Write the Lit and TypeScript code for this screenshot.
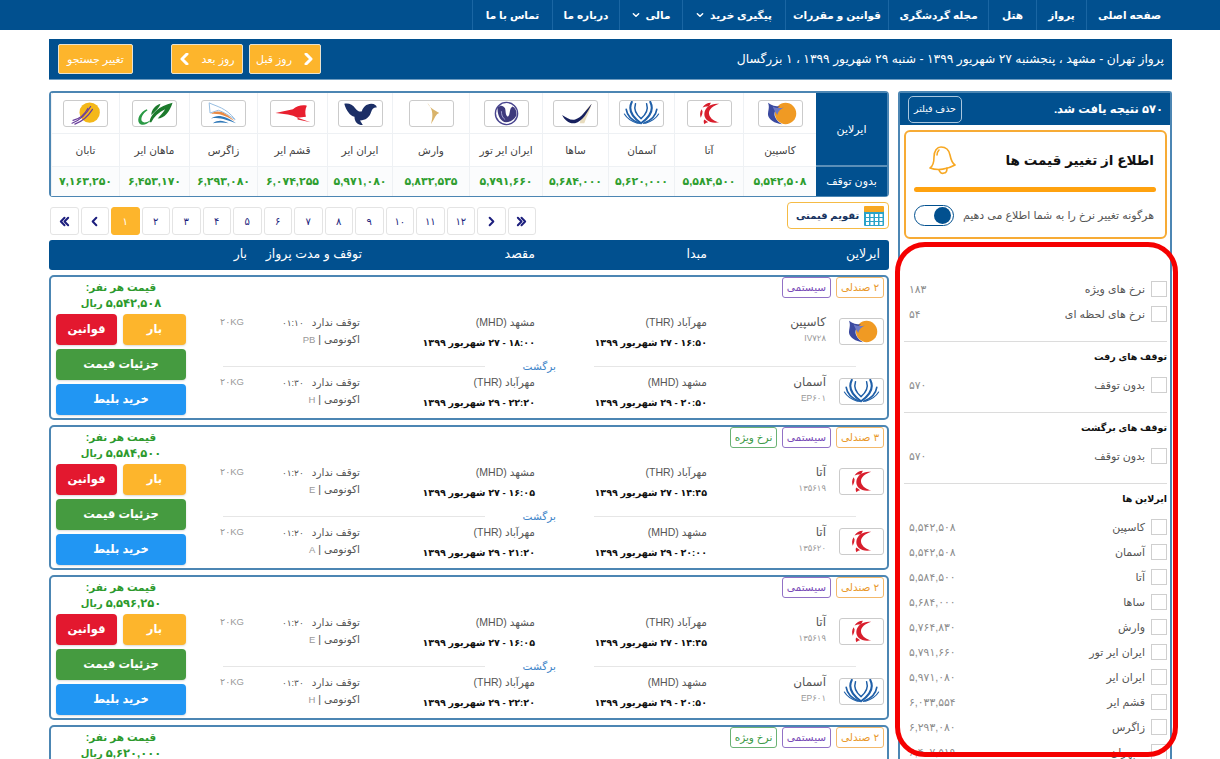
import { LitElement, html, css, svg, nothing } from 'lit';
import { customElement, property } from 'lit/decorators.js';
import { styleMap } from 'lit/directives/style-map.js';

// airline marks, all in a 45x27 box
const LOGOS: Record<string, unknown> = {
  caspian: svg`
    <circle cx="28" cy="13.5" r="11.5" fill="#f09a23" />
    <path d="M9 2c4 3 8 4 13 4-4 2-6 5-6 8 0 4 3 8 8 11-8-1-14-5-15-10 0-5 2-8 0-13z" fill="#3b4aa0" />
    <path d="M14 6c4 2 8 2 12 1-4 2-6 4-7 8-2-3-4-6-5-9z" fill="#6d79c4" />
  `,
  ata: svg`
    <path d="M33 3c-8-1-15 3-16 10-1 7 6 12 16 10-5-1-10-4-11-9-1-5 5-9 11-11z" fill="#d81e2c" />
    <path d="M24 2c-4 0-7 2-9 5 2-1 5-1 7-1zM14 9c-2 3-2 6-1 9 1-2 2-4 2-7zM17 20c-1 1-1 3 0 5 1-1 3-2 4-2z" fill="#d81e2c" />
  `,
  aseman: svg`
    <g fill="none" stroke="#1f5fa8" stroke-linecap="round">
      <path d="M12 1c-4 8 0 16 10 23 10-7 14-15 10-23" stroke-width="2.2" />
      <path d="M16 3c-2 6 0 11 6 16 6-5 8-10 6-16" stroke-width="1.6" />
      <path d="M6 9c1 7 6 12 14 15M39 9c-1 7-6 12-14 15" stroke-width="1.8" />
      <path d="M4 14c3 5 8 8 14 10M41 14c-3 5-8 8-14 10" stroke-width="1.2" />
    </g>
  `,
  saha: svg`
    <path d="M40 3c-2 8-6 15-8 21h-5c2-8 7-16 13-21z" fill="#e8dcbd" />
    <path d="M8 15c5 3 9 6 14 5 7-2 12-10 18-17-4 9-10 19-18 21-6 1-11-3-14-9z" fill="#17205e" />
  `,
  iranairtour: svg`
    <circle cx="22.5" cy="13.5" r="12" fill="#fff" stroke="#4a4690" stroke-width="1.5" />
    <path d="M13 7c3-3 6-2 8 1 1 4 0 7 3 9 3-2 1-9 5-11 3 1 5 5 4 10-2 4-6 7-11 7-6 0-10-9-9-16z" fill="#3e3a7d" />
    <path d="M17 11c0 4 1 7 4 9" fill="none" stroke="#a8a6d4" stroke-width="1" />
  `,
  varesh: svg`<path d="M18 2c3 6 9 9 13 11-4 1-5 6-9 12 2-8 3-15-4-23z" fill="#d9b36a" />`,
  iranair: svg`
    <path d="M5 3c5-1 9 1 12 5 2 3 5 4 7 3 1-4 5-8 10-8 4 0 6 2 6 4-4 0-5 2-6 5-2 6-6 9-12 9l3 5c-6 0-9-4-9-9-5-1-9-7-11-14z" fill="#1c2f66" />
  `,
  qeshm: svg`
    <path d="M4 13l19-4c4-4 10-5 15-4-2 4-2 8-1 12l-9 1c-6-3-14-4-24-5z" fill="#e8202f" />
    <path d="M28 18l14 5-14-3z" fill="#e8202f" />
  `,
  zagros: svg`
    <path d="M7 2c8 4 18 5 28 18-6-4-12-8-18-10l-9 3z" fill="none" stroke="#8fb8dd" stroke-width="1" />
    <path d="M9 14c7-5 14-3 26 8-9-5-16-9-26-8z" fill="#e98a45" />
    <path d="M9 19c7-5 15-3 27 5-10-3-17-7-27-5z" fill="#2f78b8" />
    <path d="M11 24c6-4 11-3 17 0-6-1-11-1-17 0z" fill="#2f78b8" />
  `,
  mahan: svg`
    <path d="M17 23c2-10 10-17 25-21-3 10-9 17-16 17 2-3 6-6 8-10-7 3-12 8-15 14z" fill="#1c7a2c" />
    <path d="M19 15c0-5 4-10 10-12-1 4-5 8-10 12z" fill="#1c7a2c" />
    <path d="M6 24c-3-4 1-12 8-15l1 1c-5 3-8 9-6 12 2 2 5 1 9-1-4 5-9 6-12 3z" fill="#2a9a45" />
  `,
  taban: svg`
    <circle cx="27" cy="12.5" r="11" fill="#f4b81a" />
    <g fill="none" stroke="#6a3f9c" stroke-width="1.3" stroke-linecap="round">
      <path d="M8 24c8-3 15-9 20-18" />
      <path d="M11 25c8-3 14-8 19-16" />
      <path d="M9 21c7-2 13-7 16-13" />
    </g>
  `,
};

@customElement('airline-logo')
export class AirlineLogo extends LitElement {
  @property({ type: String }) name = '';

  static styles = css`
    :host {
      display: block;
      width: 45px;
      height: 27px;
      box-sizing: border-box;
      border: 1px solid #cbcbcb;
      border-radius: 3px;
      background: #fff;
      overflow: hidden;
    }
    svg {
      display: block;
      width: 43px;
      height: 25px;
    }
  `;

  render() {
    return html`<svg viewBox="0 0 45 27">${LOGOS[this.name]}</svg>`;
  }
}

interface Leg {
  logo: string;
  airline: string;
  code: string;
  from: string;
  fromTime: string;
  to: string;
  toTime: string;
  duration: string;
  cls: string;
}

interface Flight {
  seats: string;
  special: boolean;
  price: string;
  legs: Leg[];
}

const caspianOut: Leg = {
  logo: 'caspian', airline: 'کاسپین', code: 'IV۷۲۸',
  from: 'مهرآباد (THR)', fromTime: '۱۶:۵۰ - ۲۷ شهریور ۱۳۹۹',
  to: 'مشهد (MHD)', toTime: '۱۸:۰۰ - ۲۷ شهریور ۱۳۹۹',
  duration: '۰۱:۱۰', cls: 'PB',
};
const asemanBack: Leg = {
  logo: 'aseman', airline: 'آسمان', code: 'EP۶۰۱',
  from: 'مشهد (MHD)', fromTime: '۲۰:۵۰ - ۲۹ شهریور ۱۳۹۹',
  to: 'مهرآباد (THR)', toTime: '۲۲:۲۰ - ۲۹ شهریور ۱۳۹۹',
  duration: '۰۱:۳۰', cls: 'H',
};
const ataOut: Leg = {
  logo: 'ata', airline: 'آتا', code: '۱۳۵۶۱۹',
  from: 'مهرآباد (THR)', fromTime: '۱۴:۴۵ - ۲۷ شهریور ۱۳۹۹',
  to: 'مشهد (MHD)', toTime: '۱۶:۰۵ - ۲۷ شهریور ۱۳۹۹',
  duration: '۰۱:۲۰', cls: 'E',
};
const ataBack: Leg = {
  logo: 'ata', airline: 'آتا', code: '۱۳۵۶۲۰',
  from: 'مشهد (MHD)', fromTime: '۲۰:۰۰ - ۲۹ شهریور ۱۳۹۹',
  to: 'مهرآباد (THR)', toTime: '۲۱:۲۰ - ۲۹ شهریور ۱۳۹۹',
  duration: '۰۱:۲۰', cls: 'A',
};

const FLIGHTS: Flight[] = [
  { seats: '۲ صندلی', special: false, price: '۵,۵۴۲,۵۰۸', legs: [caspianOut, asemanBack] },
  { seats: '۳ صندلی', special: true, price: '۵,۵۸۴,۵۰۰', legs: [ataOut, ataBack] },
  { seats: '۲ صندلی', special: false, price: '۵,۵۹۶,۲۵۰', legs: [ataOut, asemanBack] },
  { seats: '۲ صندلی', special: true, price: '۵,۶۲۰,۰۰۰', legs: [asemanBack, asemanBack] },
];

@customElement('flight-card')
export class FlightCard extends LitElement {
  @property({ attribute: false }) flight!: Flight;

  static styles = css`
    :host {
      display: flex;
      height: 145px;
      box-sizing: border-box;
      margin-bottom: 5px;
      border: 2px solid #4c86b3;
      border-radius: 5px;
      background: #fff;
      overflow: hidden;
    }
    .main {
      flex: 1;
      padding-right: 3px;
    }
    .tags {
      display: flex;
      gap: 5px;
      height: 37px;
    }
    .tag {
      height: 21px;
      box-sizing: border-box;
      border: 1px solid;
      border-radius: 3px;
      font-size: 10.5px;
      line-height: 19px;
      text-align: center;
    }
    .tag.seats {
      width: 48px;
      color: #ea9a2c;
      border-color: #f3b96c;
    }
    .tag.system {
      width: 49px;
      color: #7a4cb8;
      border-color: #9271c6;
    }
    .tag.special {
      width: 47px;
      color: #3d9b47;
      border-color: #6bb274;
    }
    .leg {
      display: grid;
      grid-template-columns: 177px 172px 175px 116px 58px;
      height: 44px;
      font-size: 10.5px;
      line-height: 16px;
      color: #555;
    }
    .carrier {
      display: flex;
      gap: 13px;
    }
    .carrier-name {
      font-size: 12px;
    }
    airline-logo {
      margin-top: 4px;
    }
    .muted {
      font-size: 9.5px;
      color: #999;
    }
    .code {
      font-size: 8.5px;
      color: #999;
    }
    .time {
      margin-top: 5px;
      font-size: 9.6px;
      font-weight: bold;
      color: #111;
    }
    .dur {
      margin-right: 8px;
      font-size: 9px;
    }
    .back {
      display: grid;
      grid-template-columns: 262px 109px 262px;
      align-items: center;
      height: 16px;
      margin-right: 28px;
      font-size: 10.5px;
      color: #3f86c9;
    }
    .back span {
      margin-right: 38px;
    }
    .back i {
      height: 1px;
      background: #e6e6e6;
    }
    .side {
      width: 130px;
      margin-left: 5px;
      padding-top: 2px;
      text-align: center;
      color: #2d9a2d;
      font-weight: bold;
      font-size: 10.5px;
      line-height: 16px;
    }
    .price {
      font-size: 11.5px;
    }
    .rial {
      font-size: 10px;
    }
    .btns {
      display: flex;
      flex-wrap: wrap;
      gap: 4px 6px;
      margin-top: 2px;
    }
    .btn {
      width: 100%;
      height: 31px;
      border-radius: 4px;
      color: #fff;
      font-size: 11.5px;
      font-weight: bold;
      line-height: 30px;
      box-shadow: 0 1px 2px rgba(0, 0, 0, 0.15);
    }
    .btn.half {
      width: 63px;
    }
    .btn.half + .btn.half {
      width: 61px;
    }
    .orange {
      background: #fdb52c;
    }
    .red {
      background: #e3182f;
    }
    .green {
      background: #459b40;
    }
    .sky {
      background: #2196f3;
    }
  `;

  private renderLeg(leg: Leg) {
    return html`
      <div class="leg">
        <div class="carrier">
          <airline-logo .name=${leg.logo}></airline-logo>
          <div>
            <div class="carrier-name">${leg.airline}</div>
            <div class="code">${leg.code}</div>
          </div>
        </div>
        <div>
          <div>${leg.from}</div>
          <div class="time">${leg.fromTime}</div>
        </div>
        <div>
          <div>${leg.to}</div>
          <div class="time">${leg.toTime}</div>
        </div>
        <div>
          <div>توقف ندارد<span class="dur">${leg.duration}</span></div>
          <div>اکونومی | <span class="muted">${leg.cls}</span></div>
        </div>
        <div class="muted">۲۰KG</div>
      </div>
    `;
  }

  render() {
    const f = this.flight;
    return html`
      <div class="main">
        <div class="tags">
          <div class="tag seats">${f.seats}</div>
          <div class="tag system">سیستمی</div>
          ${f.special ? html`<div class="tag special">نرخ ویژه</div>` : nothing}
        </div>
        ${this.renderLeg(f.legs[0])}
        <div class="back"><i></i><span>برگشت</span><i></i></div>
        ${this.renderLeg(f.legs[1])}
      </div>
      <div class="side">
        <div>قیمت هر نفر:</div>
        <div><span class="price">${f.price}</span> <span class="rial">ریال</span></div>
        <div class="btns">
          <div class="btn half orange">بار</div>
          <div class="btn half red">قوانین</div>
          <div class="btn green">جزئیات قیمت</div>
          <div class="btn sky">خرید بلیط</div>
        </div>
      </div>
    `;
  }
}

const FILTER_GROUPS = [
  {
    title: '',
    rows: [
      ['نرخ های ویژه', '۱۸۳'],
      ['نرخ های لحظه ای', '۵۴'],
    ],
  },
  { title: 'توقف های رفت', rows: [['بدون توقف', '۵۷۰']] },
  { title: 'توقف های برگشت', rows: [['بدون توقف', '۵۷۰']] },
  {
    title: 'ایرلاین ها',
    rows: [
      ['کاسپین', '۵,۵۴۲,۵۰۸'],
      ['آسمان', '۵,۵۴۲,۵۰۸'],
      ['آتا', '۵,۵۸۴,۵۰۰'],
      ['ساها', '۵,۶۸۴,۰۰۰'],
      ['وارش', '۵,۷۶۴,۸۳۰'],
      ['ایران ایر تور', '۵,۷۹۱,۶۶۰'],
      ['ایران ایر', '۵,۹۷۱,۰۸۰'],
      ['قشم ایر', '۶,۰۳۳,۵۵۴'],
      ['زاگرس', '۶,۲۹۳,۰۸۰'],
      ['سپهران', '۶,۴۰۷,۵۱۹'],
    ],
  },
];

@customElement('filter-sidebar')
export class FilterSidebar extends LitElement {
  static styles = css`
    :host {
      display: block;
      box-sizing: border-box;
      height: 700px;
      border: 2px solid #4c86b3;
      border-bottom: 0;
      border-radius: 3px 3px 0 0;
    }
    .head {
      display: flex;
      justify-content: space-between;
      align-items: center;
      height: 32px;
      padding: 0 7px 0 8px;
      background: #01508f;
      color: #fff;
      font-size: 11.5px;
      font-weight: bold;
    }
    .clear {
      width: 54px;
      height: 27px;
      box-sizing: border-box;
      border: 1px solid #a9c6de;
      border-radius: 5px;
      font-size: 9.5px;
      font-weight: normal;
      line-height: 24px;
      text-align: center;
    }
    .notify {
      height: 109px;
      box-sizing: border-box;
      margin: 5px 3px 0 4px;
      padding: 0 9px 0 8px;
      border: 2px solid #f7ab35;
      border-radius: 6px;
    }
    .notify-head {
      display: flex;
      justify-content: space-between;
      align-items: center;
      height: 55px;
      padding-right: 2px;
      color: #111;
      font-size: 13.5px;
      font-weight: bold;
    }
    .bell {
      width: 28px;
      height: 30px;
      margin-left: 14px;
    }
    .bar {
      height: 5px;
      border-radius: 3px;
      background: #ffa20f;
    }
    .notify-foot {
      display: flex;
      justify-content: space-between;
      align-items: center;
      margin-top: 13px;
      padding-right: 2px;
      font-size: 11px;
      color: #555;
    }
    .toggle {
      width: 40px;
      height: 21px;
      box-sizing: border-box;
      padding: 1px 2px;
      border: 1px solid #01508f;
      border-radius: 11px;
    }
    .toggle i {
      display: block;
      width: 17px;
      height: 17px;
      border-radius: 50%;
      background: #01508f;
    }
    .filters {
      margin: 42px 3px 0 4px;
    }
    .group {
      padding: 5px 0 9.5px;
      border-top: 1px solid #dcdcdc;
    }
    .group:first-child {
      padding-top: 0;
      border-top: 0;
    }
    .title {
      height: 20px;
      margin-bottom: 10.5px;
      color: #111;
      font-size: 9.5px;
      font-weight: bold;
      line-height: 20px;
    }
    .row {
      display: flex;
      height: 25px;
      color: #555;
      font-size: 11px;
      line-height: 16px;
    }
    .check {
      width: 16px;
      height: 16px;
      box-sizing: border-box;
      margin-left: 6px;
      border: 1px solid #cfcfcf;
    }
    .count {
      margin-right: auto;
      padding-left: 5px;
      color: #8c8c8c;
      font-size: 10.8px;
    }
  `;

  render() {
    return html`
      <div class="head">
        <span>۵۷۰ نتیجه یافت شد.</span>
        <div class="clear">حذف فیلتر</div>
      </div>
      <div class="notify">
        <div class="notify-head">
          <span>اطلاع از تغییر قیمت ها</span>
          <svg class="bell" viewBox="0 0 28 30" fill="none" stroke="#f7a823" stroke-width="1.6" stroke-linejoin="round" stroke-linecap="round">
            <path d="M2 23c3-2 4-6 4-11 0-6 3-10 7-10 5 0 8 3 9 8 1 5 2 8 5 10-7 4-17 6-25 3z" />
            <path d="M11 25c1 3 3 4 5 3 2 0 3-2 3-5" />
            <path d="M9 10c0-2 1-4 2-5" />
          </svg>
        </div>
        <div class="bar"></div>
        <div class="notify-foot">
          <span>هرگونه تغییر نرخ را به شما اطلاع می دهیم</span>
          <div class="toggle"><i></i></div>
        </div>
      </div>
      <div class="filters">
        ${FILTER_GROUPS.map(
          (g) => html`
            <div class="group">
              ${g.title ? html`<div class="title">${g.title}</div>` : nothing}
              ${g.rows.map(
                ([label, count]) => html`
                  <div class="row">
                    <div class="check"></div>
                    <span>${label}</span>
                    <span class="count">${count}</span>
                  </div>
                `,
              )}
            </div>
          `,
        )}
      </div>
    `;
  }
}

const NAV = [
  { label: 'صفحه اصلی', width: 86 },
  { label: 'پرواز', width: 50 },
  { label: 'هتل', width: 48 },
  { label: 'مجله گردشگری', width: 100 },
  { label: 'قوانین و مقررات', width: 103 },
  { label: 'پیگیری خرید', width: 103, caret: true },
  { label: 'مالی', width: 63, caret: true },
  { label: 'درباره ما', width: 67 },
  { label: 'تماس با ما', width: 80 },
];

const AIRLINES = [
  ['caspian', 'کاسپین', '۵,۵۴۲,۵۰۸'],
  ['ata', 'آتا', '۵,۵۸۴,۵۰۰'],
  ['aseman', 'آسمان', '۵,۶۲۰,۰۰۰'],
  ['saha', 'ساها', '۵,۶۸۴,۰۰۰'],
  ['iranairtour', 'ایران ایر تور', '۵,۷۹۱,۶۶۰'],
  ['varesh', 'وارش', '۵,۸۳۲,۵۳۵'],
  ['iranair', 'ایران ایر', '۵,۹۷۱,۰۸۰'],
  ['qeshm', 'قشم ایر', '۶,۰۷۴,۲۵۵'],
  ['zagros', 'زاگرس', '۶,۲۹۳,۰۸۰'],
  ['mahan', 'ماهان ایر', '۶,۴۵۳,۱۷۰'],
  ['taban', 'تابان', '۷,۱۶۳,۲۵۰'],
];

const PAGES = ['۱', '۲', '۳', '۴', '۵', '۶', '۷', '۸', '۹', '۱۰', '۱۱', '۱۲'];

const chevron = (points: string, size = 12, weight = 2.2) => html`
  <svg width=${size} height=${size} viewBox="0 0 12 12" fill="none" stroke="currentColor" stroke-width=${weight} stroke-linecap="round" stroke-linejoin="round">
    ${points.split('|').map((p) => svg`<polyline points=${p} />`)}
  </svg>
`;

@customElement('app-root')
export class AppRoot extends LitElement {
  static styles = css`
    :host {
      display: block;
      position: relative;
      height: 759px;
      overflow: hidden;
      direction: rtl;
      background: #fff;
      font-family: 'Liberation Sans', 'DejaVu Sans', sans-serif;
    }
    nav {
      display: flex;
      height: 30px;
      padding-right: 48px;
      background: #01508f;
      color: #fff;
      font-size: 10.5px;
      font-weight: bold;
    }
    .nav-item {
      display: flex;
      justify-content: center;
      align-items: center;
      gap: 6px;
      box-sizing: border-box;
      border-left: 1px solid #1a66a3;
    }
    .page {
      padding: 0 48px 0 49px;
    }
    .bar {
      display: flex;
      justify-content: space-between;
      align-items: center;
      height: 41px;
      box-sizing: border-box;
      margin: 9px 0 11px;
      padding: 0 8px 0 9px;
      background: #01508f;
      color: #fff;
      font-size: 12.3px;
      border-bottom: 1px solid #6f9cc0;
    }
    .bar-actions {
      display: flex;
      gap: 38px;
    }
    .day-btns {
      display: flex;
      gap: 6px;
    }
    .amber {
      display: flex;
      justify-content: center;
      align-items: center;
      gap: 10px;
      height: 30px;
      box-sizing: border-box;
      border: 1px solid #e8e2d0;
      border-radius: 2px;
      background: #fdb52c;
      color: #fff;
      font-size: 11px;
    }
    .w72 {
      width: 72px;
    }
    .w75 {
      width: 75px;
    }
    .columns {
      display: grid;
      grid-template-columns: 274px 840px;
      gap: 9px;
    }
    .airlines {
      display: grid;
      grid-template-columns: 71px 73px 69px 66px 66px 73px 77px 65px 70px 68px 70px 68px;
      grid-template-rows: 41px 33px 29px;
      height: 106px;
      box-sizing: border-box;
      border: 2px solid #4c86b3;
      border-radius: 4px;
      background: #fff;
    }
    .airlines .cell {
      display: flex;
      justify-content: center;
      align-items: center;
      box-sizing: border-box;
      border-left: 1px solid #eef1f4;
      border-bottom: 1px solid #eef1f4;
      color: #444;
      font-size: 10.5px;
    }
    .airlines .lead {
      background: #01508f;
      color: #fff;
      font-size: 11px;
      border: 0;
    }
    .airlines .span {
      grid-row: span 2;
      border-bottom: 2px solid #5b8fb8;
    }
    .airlines .price {
      color: #2f9e2f;
      font-size: 11px;
      font-weight: bold;
      border-bottom: 0;
      background: #fbfcfd;
    }
    .tools {
      display: flex;
      justify-content: space-between;
      align-items: flex-start;
      height: 43px;
    }
    .calendar {
      display: flex;
      align-items: center;
      justify-content: space-between;
      width: 102px;
      height: 27px;
      box-sizing: border-box;
      margin-top: 5px;
      padding: 0 3px 0 8px;
      border: 1.5px solid #f5bb45;
      border-radius: 4px;
      color: #16335f;
      font-size: 10px;
      font-weight: bold;
    }
    .pager {
      display: flex;
      direction: ltr;
      gap: 2px;
      margin: 10px 0 0 1px;
    }
    .pager div {
      display: flex;
      justify-content: center;
      align-items: center;
      width: 28.5px;
      height: 28px;
      box-sizing: border-box;
      border: 1px solid #e4e4e4;
      border-radius: 3px;
      color: #1d1f7e;
      font-size: 10px;
    }
    .pager .on {
      border-color: #fdb52c;
      background: #fdb52c;
      color: #fff;
    }
    .thead {
      display: grid;
      grid-template-columns: 173px 172px 173px 115px 60px;
      height: 30px;
      margin-bottom: 5px;
      padding-right: 9px;
      border-radius: 3px;
      background: #01508f;
      color: #fff;
      font-size: 12.5px;
      line-height: 28px;
    }
    .mark {
      position: absolute;
      left: 895px;
      top: 242px;
      width: 283px;
      height: 515px;
      box-sizing: border-box;
      border: 5px solid #f50000;
      border-radius: 30px;
      pointer-events: none;
    }
  `;

  render() {
    return html`
      <nav>
        ${NAV.map(
          (n) => html`
            <div class="nav-item" style=${styleMap({ width: `${n.width}px` })}>
              ${n.label} ${n.caret ? chevron('2,4 6,8 10,4', 8) : nothing}
            </div>
          `,
        )}
      </nav>
      <div class="page">
        <div class="bar">
          <span>پرواز تهران - مشهد ، پنجشنبه ۲۷ شهریور ۱۳۹۹ - شنبه ۲۹ شهریور ۱۳۹۹ ، ۱ بزرگسال</span>
          <div class="bar-actions">
            <div class="day-btns">
              <div class="amber w72">${chevron('4,1 9,6 4,11', 12, 3)} روز قبل</div>
              <div class="amber w72">روز بعد ${chevron('8,1 3,6 8,11', 12, 3)}</div>
            </div>
            <div class="amber w75">تغییر جستجو</div>
          </div>
        </div>
        <div class="columns">
          <filter-sidebar></filter-sidebar>
          <div>
            <div class="airlines">
              <div class="cell lead span">ایرلاین</div>
              ${AIRLINES.map(([logo]) => html`<div class="cell"><airline-logo .name=${logo}></airline-logo></div>`)}
              ${AIRLINES.map(([, name]) => html`<div class="cell">${name}</div>`)}
              <div class="cell lead">بدون توقف</div>
              ${AIRLINES.map(([, , price]) => html`<div class="cell price">${price}</div>`)}
            </div>
            <div class="tools">
              <div class="calendar">
                <svg width="22" height="22" viewBox="0 0 22 22">
                  <rect x="1" y="3" width="20" height="18" rx="1" fill="#2aa3c8" />
                  <rect x="1" y="1" width="20" height="6" rx="1" fill="#f7a823" />
                  ${[9, 13, 17].map((y) =>
                    [3, 7.5, 12, 16.5].map((x) => svg`<rect x=${x} y=${y} width="3" height="3" fill="#fff" />`),
                  )}
                </svg>
                <span>تقویم قیمتی</span>
              </div>
              <div class="pager">
                <div>${chevron('6,2 2,6 6,10|10,2 6,6 10,10', 11)}</div>
                <div>${chevron('8,2 4,6 8,10', 11)}</div>
                ${PAGES.map((p, i) => html`<div class=${i === 0 ? 'on' : ''}>${p}</div>`)}
                <div>${chevron('4,2 8,6 4,10', 11)}</div>
                <div>${chevron('2,2 6,6 2,10|6,2 10,6 6,10', 11)}</div>
              </div>
            </div>
            <div class="thead">
              <span>ایرلاین</span>
              <span>مبدا</span>
              <span>مقصد</span>
              <span>توقف و مدت پرواز</span>
              <span>بار</span>
            </div>
            ${FLIGHTS.map((f) => html`<flight-card .flight=${f}></flight-card>`)}
          </div>
        </div>
      </div>
      <div class="mark"></div>
    `;
  }
}
